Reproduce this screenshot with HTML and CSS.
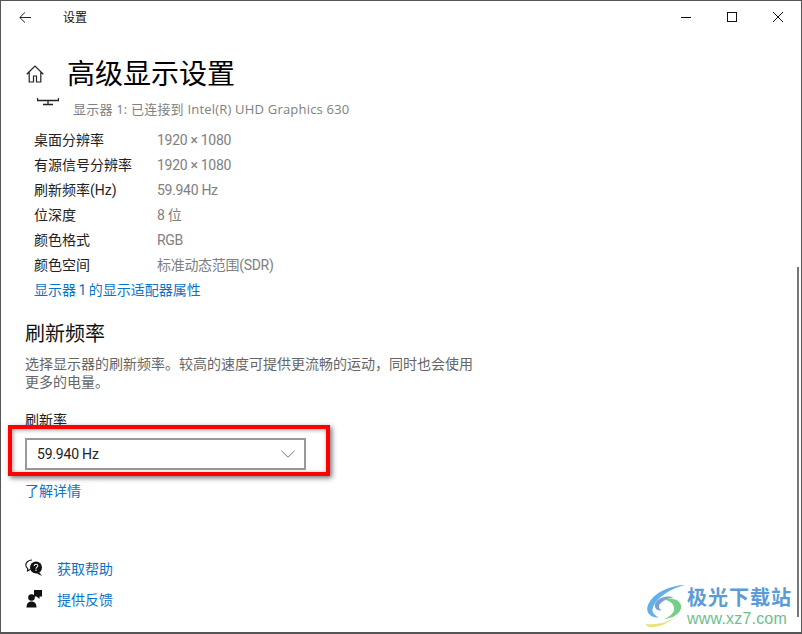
FILE: index.html
```html
<!DOCTYPE html>
<html lang="zh">
<head>
<meta charset="utf-8">
<title>设置</title>
<link rel="stylesheet" href="styles.css">
</head>
<body>
<div class="window">
  <header class="titlebar">
    <svg class="back" viewBox="0 0 12 11" width="12" height="11"><path d="M6 .4 .8 5.500 6 10.600M.8 5.500H12" fill="none" stroke="#222" stroke-width="1"/></svg>
    <span class="apptitle">设置</span>
    <div class="controls">
      <svg class="ctl" viewBox="0 0 10 10" width="10" height="10"><path d="M0 5.500h10" stroke="#111" stroke-width="1"/></svg>
      <svg class="ctl" viewBox="0 0 10 10" width="10" height="10"><rect x=".5" y=".5" width="9" height="9" fill="none" stroke="#111"/></svg>
      <svg class="ctl" viewBox="0 0 10 10" width="10" height="10"><path d="M0 0l10 10M10 0 0 10" stroke="#111" stroke-width="1"/></svg>
    </div>
  </header>

  <div class="pagehead">
    <svg class="home" viewBox="0 0 18 18" width="18" height="18"><path d="M.7 9.200 9 1l8.300 8.200M3.200 7v10h4.300v-6h3v6h4.300V7" fill="none" stroke="#222" stroke-width="1.200"/></svg>
    <h1>高级显示设置</h1>
  </div>

  <div class="monitor">
    <svg class="monitor-icon" viewBox="0 0 22 8" width="22" height="8"><path d="M.5 0v2.500h21V0M11 2.500v3.500M6 6.500h10" fill="none" stroke="#222" stroke-width="1.300"/></svg>
    <span class="monitor-text">显示器 1: 已连接到 Intel(R) UHD Graphics 630</span>
  </div>

  <dl class="info">
    <div class="row"><dt>桌面分辨率</dt><dd>1920 × 1080</dd></div>
    <div class="row"><dt>有源信号分辨率</dt><dd>1920 × 1080</dd></div>
    <div class="row"><dt>刷新频率(Hz)</dt><dd>59.940 Hz</dd></div>
    <div class="row"><dt>位深度</dt><dd>8 位</dd></div>
    <div class="row"><dt>颜色格式</dt><dd>RGB</dd></div>
    <div class="row"><dt>颜色空间</dt><dd>标准动态范围(SDR)</dd></div>
  </dl>
  <a class="link adapter">显示器 1 的显示适配器属性</a>

  <h2>刷新频率</h2>
  <p class="desc">选择显示器的刷新频率。较高的速度可提供更流畅的运动，同时也会使用更多的电量。</p>

  <div class="field-label">刷新率</div>
  <div class="select">
    <span class="select-value">59.940 Hz</span>
    <svg viewBox="0 0 14 8" width="14" height="8"><path d="M.5 .8 7 7.200 13.500 .8" fill="none" stroke="#777" stroke-width="1"/></svg>
  </div>
  <a class="link more">了解详情</a>

  <div class="help">
    <div class="help-row">
      <svg class="help-icon" viewBox="0 0 18 18" width="18" height="18">
        <path d="M7 1C3.500 1 .8 3.300 .8 6c0 1.500.8 2.800 2 3.700L2.500 12l3-1.700" fill="#fff" stroke="#111" stroke-width="1.100"/>
        <circle cx="11" cy="8.500" r="6" fill="#111"/>
        <path d="M14 13l3 4-5-2.500z" fill="#111"/>
        <path d="M9.200 7c.2-2.300 3.600-2.300 3.600-.2 0 1.400-1.800 1.400-1.800 2.900M11 10.600v1.300" fill="none" stroke="#fff" stroke-width="1.100"/>
      </svg>
      <a class="link">获取帮助</a>
    </div>
    <div class="help-row">
      <svg class="help-icon" viewBox="0 0 18 18" width="18" height="18">
        <path d="M9 0h8v6.500h-2.500V9L11.500 6.500H9z" fill="#111"/>
        <circle cx="6.500" cy="7.500" r="3.300" fill="#111"/>
        <path d="M1.500 17.500c0-4 2-6 5-6s5 2 5 6z" fill="#111"/>
      </svg>
      <a class="link">提供反馈</a>
    </div>
  </div>

  <div class="scrollbar"></div>
  <div class="annotation"></div>

  <div class="watermark">
    <svg class="wm-logo" viewBox="0 0 48 52" width="44" height="46">
      <path d="M47 2C30 3 12 10 5 24c-4 9 3 16 12 15-6-3-9-7-6-13C16 15 30 7 47 2z" fill="#62b0e8"/>
      <path d="M34 16c-9-2-18 1-21 7-2 5 2 9 7 8-3-2-4-5-1-8 4-4 9-6 15-7z" fill="#7a9fd6"/>
      <path d="M21 19c8-3 19-1 21 6 2 8-8 15-19 16 6-3 13-8 11-14-1-5-7-8-13-8z" fill="#74cf8a"/>
      <path d="M2 46c12 2 26-1 34-8-7 7-17 12-28 12-3 0-5-2-6-4z" fill="#e8e27a"/>
    </svg>
    <div class="wm-text">
      <span class="wm-cn">极光下载站</span>
      <span class="wm-url">www.xz7.com</span>
    </div>
  </div>
</div>
</body>
</html>
```
FILE: styles.css
```css
* { box-sizing: border-box; margin: 0; padding: 0; }
html, body { width: 802px; height: 634px; overflow: hidden; background: #fff; }
body { font-family: Roboto, "Noto Sans CJK SC", sans-serif; color: #000; }

.window {
  position: relative;
  width: 802px;
  height: 634px;
  background: #fff;
  border: 1px solid #555;
  border-bottom-width: 2px;
  font-size: 14px;
}

.titlebar { display: flex; align-items: center; height: 32px; padding-left: 18px; }
.back { margin-right: 32px; }
.apptitle { font: 12px/16px "Noto Sans CJK SC", sans-serif; color: #111; }
.controls { margin-left: auto; display: flex; }
.ctl { width: 46px; }

.pagehead { display: flex; align-items: center; height: 50px; margin-top: 14px; padding-left: 25px; }
.home { margin-top: 3px; }
h1 { margin-left: 23px; font: 400 28px/38px "Noto Sans CJK SC", sans-serif; color: #000; }

.monitor { position: relative; height: 24px; margin-top: -2px; padding-left: 72px; display: flex; align-items: flex-end; }
.monitor-icon { position: absolute; left: 36px; top: 3px; }
.monitor-text { font-family: "Open Sans", "Noto Sans CJK SC", sans-serif; font-size: 13px; letter-spacing: .2px; line-height: 20px; color: #808080; white-space: nowrap; }

.info { margin-top: 9px; padding-left: 33px; }
.row { display: flex; height: 25px; line-height: 25px; }
dt { width: 123px; color: #222; }
dd { color: #808080; letter-spacing: -.3px; }

.link { color: #0a74c8; display: block; }
.adapter { margin-left: 33px; line-height: 25px; word-spacing: -1px; }

h2 { margin: 16px 0 0 24px; font: 400 20px/28px "Noto Sans CJK SC", sans-serif; color: #111; }
.desc { margin: 8px 0 0 24px; width: 450px; line-height: 18px; color: #666; }

.field-label { margin: 19px 0 0 24px; line-height: 20px; color: #222; }
.select {
  display: flex;
  align-items: center;
  justify-content: space-between;
  width: 281px;
  height: 32px;
  margin: 8px 0 0 24px;
  padding: 0 9px 0 10px;
  border: 2px solid #999;
  color: #222;
}
.select-value { letter-spacing: -.2px; }
.more { margin: 10px 0 0 24px; line-height: 22px; }

.help { margin: 55px 0 0 24px; display: flex; flex-direction: column; gap: 9px; }
.help-row { display: flex; align-items: center; height: 22px; }
.help-icon { margin-right: 14px; flex: none; }

.scrollbar { position: absolute; right: 2px; top: 266px; width: 2px; height: 350px; background: #777; }

.annotation {
  position: absolute;
  left: 7px;
  top: 424px;
  width: 322px;
  height: 51px;
  border: 4px solid #f00;
  box-shadow: 2px 2px 5px rgba(0,0,0,.55), inset 1px 1px 4px rgba(0,0,0,.4);
}

.watermark { position: absolute; left: 642px; top: 582px; display: flex; align-items: flex-start; }
.wm-text { display: flex; flex-direction: column; margin-top: 2px; }
.wm-cn { font: 700 20px/24px "Noto Sans CJK SC", sans-serif; color: #5a9bd8; letter-spacing: 1px; white-space: nowrap; }
.wm-url { font: 400 16px/20px "Liberation Sans", sans-serif; color: #6cc08a; white-space: nowrap; letter-spacing: .2px; }
```
